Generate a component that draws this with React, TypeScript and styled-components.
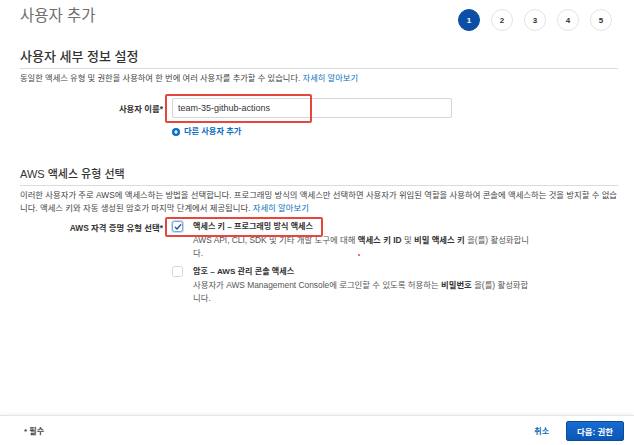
import styled, { createGlobalStyle } from 'styled-components'

const GlobalStyle = createGlobalStyle`
  html, body {
    margin: 0;
    padding: 0;
    background: #ffffff;
  }
  body {
    font-family: "Liberation Sans", "Noto Sans CJK KR", sans-serif;
    color: #444;
  }
  * {
    box-sizing: border-box;
  }
`

const Page = styled.div`
  width: 634px;
  height: 445px;
  display: flex;
  flex-direction: column;
  overflow: hidden;
`

const Main = styled.div`
  flex: 1;
  padding: 0 16px 0 20px;
`

const Header = styled.div`
  height: 40px;
  display: flex;
  align-items: center;
  justify-content: space-between;
`

const Title = styled.h1`
  margin: 0 0 8px 0;
  font-size: 15.5px;
  line-height: 20px;
  font-weight: 400;
  color: #6f6f6f;
`

const Steps = styled.div`
  display: flex;
  gap: 11px;
  margin-right: 6px;
`

const Step = styled.div<{ active?: boolean }>`
  width: 22px;
  height: 22px;
  border-radius: 50%;
  display: flex;
  align-items: center;
  justify-content: center;
  font-size: 8px;
  font-weight: 700;
  color: ${({ active }) => (active ? '#ffffff' : '#333')};
  background: ${({ active }) => (active ? '#0c4ea6' : '#ffffff')};
  border: 1px solid ${({ active }) => (active ? '#0c4ea6' : '#e1e4e6')};
`

const SectionTitle = styled.h2<{ size: number; top: number }>`
  margin: ${({ top }) => top}px 0 0 0;
  padding-bottom: 3px;
  font-size: ${({ size }) => size}px;
  line-height: 16px;
  font-weight: 500;
  color: #333;
  border-bottom: 1px solid #d9dcde;
`

const Desc = styled.p<{ size: number }>`
  margin: 3px 0 0 0;
  font-size: ${({ size }) => size}px;
  line-height: 13px;
  color: #444;
`

const Link = styled.a`
  color: #0a6ebd;
  text-decoration: none;
  cursor: pointer;
`

const FormRow = styled.div<{ top: number }>`
  display: grid;
  grid-template-columns: 143px 1fr;
  column-gap: 9px;
  margin-top: ${({ top }) => top}px;
`

const FieldLabel = styled.div<{ height: number }>`
  height: ${({ height }) => height}px;
  display: flex;
  align-items: center;
  justify-content: flex-end;
  font-size: 8.4px;
  font-weight: 700;
  color: #333;
`

const Field = styled.div`
  position: relative;
  display: flex;
  flex-direction: column;
  align-items: flex-start;
`

const TextInput = styled.input`
  width: 280px;
  height: 20px;
  padding: 0 5px;
  border: 1px solid #d3d6d8;
  border-radius: 2px;
  font-family: "Liberation Sans", "Noto Sans CJK KR", sans-serif;
  font-size: 9px;
  color: #333;
  outline: none;
`

const Highlight = styled.div<{ left: number; top: number; w: number; h: number }>`
  position: absolute;
  left: ${({ left }) => left}px;
  top: ${({ top }) => top}px;
  width: ${({ w }) => w}px;
  height: ${({ h }) => h}px;
  border: 2px solid #e8463b;
  border-radius: 2px;
  pointer-events: none;
`

const Dot = styled.div`
  position: absolute;
  left: 186px;
  top: 34px;
  width: 2px;
  height: 2px;
  border-radius: 50%;
  background: #e8463b;
`

const AddLink = styled(Link)`
  margin-top: 8px;
  display: flex;
  align-items: center;
  gap: 4px;
  font-size: 8.2px;
  line-height: 12px;
  font-weight: 700;
`

const Options = styled.div`
  position: relative;
  display: flex;
  flex-direction: column;
  gap: 5px;
`

const Option = styled.div`
  display: flex;
  gap: 10px;
`

const Box = styled.div<{ checked?: boolean }>`
  width: 11px;
  height: 11px;
  margin-top: 1px;
  flex-shrink: 0;
  border-radius: 2.5px;
  background: #fff;
  display: flex;
  align-items: center;
  justify-content: center;
  border: 1px solid ${({ checked }) => (checked ? '#6ea7e2' : '#d5d8da')};
  box-shadow: ${({ checked }) => (checked ? '0 0 0 1px rgba(90,150,220,0.35)' : 'none')};
`

const OptionText = styled.div`
  width: 340px;
`

const OptionTitle = styled.div`
  font-size: 8.1px;
  line-height: 13px;
  font-weight: 700;
  color: #333;
  margin-bottom: 1px;
`

const OptionDesc = styled.div`
  font-size: 8.4px;
  line-height: 13px;
  color: #555;

  b {
    color: #333;
  }
`

const Footer = styled.div`
  height: 30px;
  display: flex;
  align-items: center;
  padding: 0 10px 0 24px;
  border-top: 1px solid #e3e6e8;
  box-shadow: 0 -1px 3px rgba(0, 0, 0, 0.06);
`

const Required = styled.div`
  flex: 1;
  font-size: 8px;
  font-weight: 700;
  color: #444;
`

const Cancel = styled(Link)`
  font-size: 8px;
  font-weight: 700;
  margin-right: 17px;
`

const PrimaryButton = styled.button`
  height: 20px;
  padding: 0 10px;
  border: 1px solid #0a4c9c;
  border-radius: 2px;
  background: linear-gradient(#176bd0, #0b57b6);
  color: #fff;
  font-family: "Liberation Sans", "Noto Sans CJK KR", sans-serif;
  font-size: 8.4px;
  font-weight: 700;
  cursor: pointer;
`

const PlusIcon = () => (
  <svg width="8" height="8" viewBox="0 0 16 16">
    <circle cx="8" cy="8" r="8" fill="#0a6ebd" />
    <path d="M8 4v8M4 8h8" stroke="#fff" strokeWidth="2.4" />
  </svg>
)

const CheckIcon = () => (
  <svg width="8" height="8" viewBox="0 0 16 16">
    <path d="M2.5 8.5l3.5 3.5 7.5-8.5" fill="none" stroke="#1d4f9a" strokeWidth="2.6" strokeLinecap="round" strokeLinejoin="round" />
  </svg>
)

export default function App() {
  return (
    <Page>
      <GlobalStyle />
      <Main>
        <Header>
          <Title>사용자 추가</Title>
          <Steps>
            {[1, 2, 3, 4, 5].map(n => (
              <Step key={n} active={n === 1}>
                {n}
              </Step>
            ))}
          </Steps>
        </Header>

        <SectionTitle size={13} top={9}>
          사용자 세부 정보 설정
        </SectionTitle>
        <Desc size={8.25}>
          동일한 액세스 유형 및 권한을 사용하여 한 번에 여러 사용자를 추가할 수 있습니다. <Link>자세히 알아보기</Link>
        </Desc>

        <FormRow top={13}>
          <FieldLabel height={20}>사용자 이름*</FieldLabel>
          <Field>
            <TextInput defaultValue="team-35-github-actions" />
            <Highlight left={-7} top={-4} w={147} h={29} />
            <AddLink>
              <PlusIcon />
              다른 사용자 추가
            </AddLink>
          </Field>
        </FormRow>

        <SectionTitle size={11} top={28}>
          AWS 액세스 유형 선택
        </SectionTitle>
        <Desc size={8.35}>
          이러한 사용자가 주로 AWS에 액세스하는 방법을 선택합니다. 프로그래밍 방식의 액세스만 선택하면 사용자가 위임된 역할을 사용하여 콘솔에 액세스하는 것을 방지할 수 없습니다. 액세스 키와 자동 생성된 암호가 마지막 단계에서 제공됩니다. <Link>자세히 알아보기</Link>
        </Desc>

        <FormRow top={5}>
          <FieldLabel height={13}>AWS 자격 증명 유형 선택*</FieldLabel>
          <Options>
            <Option>
              <Box checked>
                <CheckIcon />
              </Box>
              <OptionText>
                <OptionTitle>액세스 키 – 프로그래밍 방식 액세스</OptionTitle>
                <OptionDesc>
                  AWS API, CLI, SDK 및 기타 개발 도구에 대해 <b>액세스 키 ID</b> 및 <b>비밀 액세스 키</b> 을(를) 활성화합니다.
                </OptionDesc>
              </OptionText>
            </Option>
            <Option>
              <Box />
              <OptionText>
                <OptionTitle>암호 – AWS 관리 콘솔 액세스</OptionTitle>
                <OptionDesc>
                  사용자가 AWS Management Console에 로그인할 수 있도록 허용하는 <b>비밀번호</b> 을(를) 활성화합니다.
                </OptionDesc>
              </OptionText>
            </Option>
            <Highlight left={-7} top={-3} w={158} h={20} />
            <Dot />
          </Options>
        </FormRow>
      </Main>

      <Footer>
        <Required>* 필수</Required>
        <Cancel>취소</Cancel>
        <PrimaryButton>다음: 권한</PrimaryButton>
      </Footer>
    </Page>
  )
}
